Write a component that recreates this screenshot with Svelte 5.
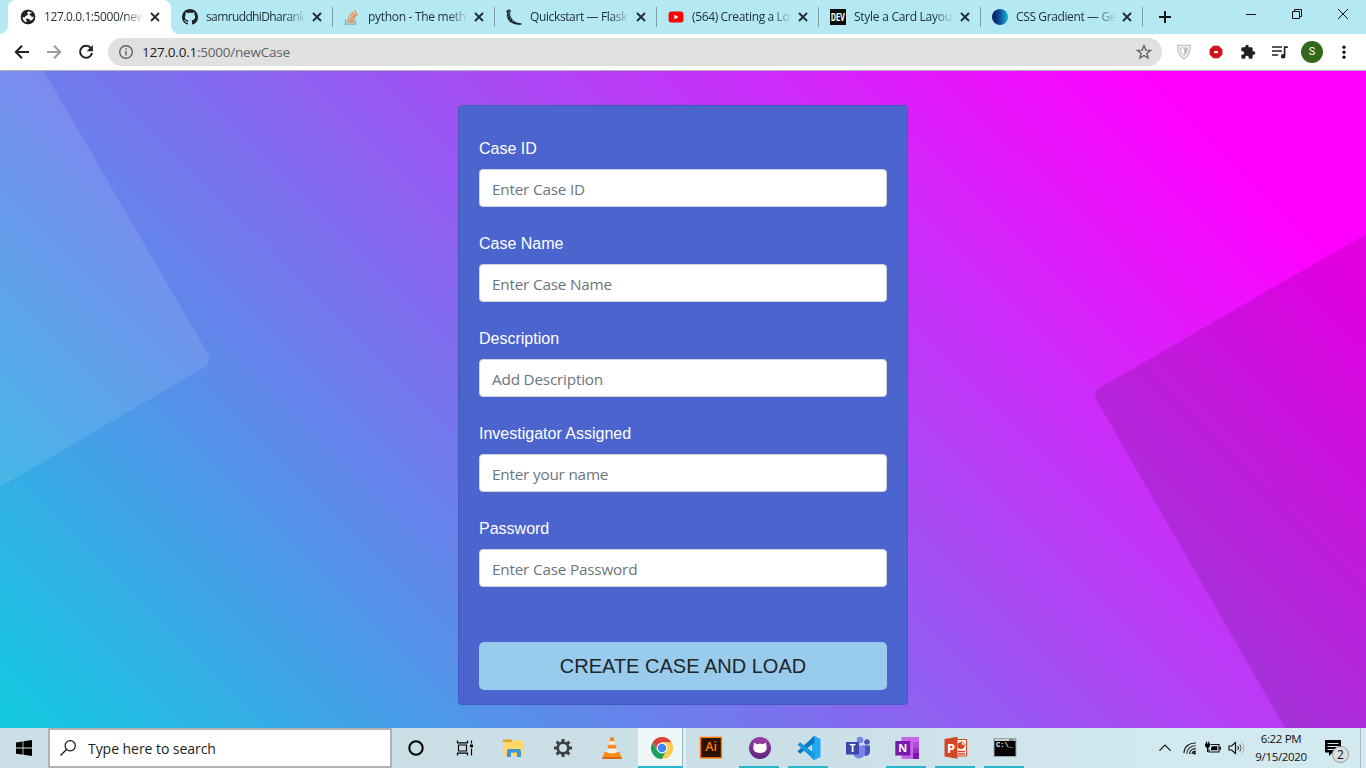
<script>
  const tabs = [
    { icon: 'globe', title: '127.0.0.1:5000/new', ls: -0.42 },
    { icon: 'github', title: 'samruddhiDharank', ls: -0.62 },
    { icon: 'stack', title: 'python - The meth', ls: -0.3 },
    { icon: 'flask', title: 'Quickstart — Flask', ls: -0.38 },
    { icon: 'youtube', title: '(564) Creating a Lo', ls: -0.36 },
    { icon: 'dev', title: 'Style a Card Layou', ls: -0.27 },
    { icon: 'gradient', title: 'CSS Gradient — Ge', ls: -0.38 }
  ];
  const fields = [
    { id: 'case-id', label: 'Case ID', hint: 'Enter Case ID' },
    { id: 'case-name', label: 'Case Name', hint: 'Enter Case Name' },
    { id: 'description', label: 'Description', hint: 'Add Description' },
    { id: 'investigator', label: 'Investigator Assigned', hint: 'Enter your name' },
    { id: 'password', label: 'Password', hint: 'Enter Case Password' }
  ];
  const apps = [
    { name: 'cortana' }, { name: 'taskview' }, { name: 'explorer' }, { name: 'settings' },
    { name: 'vlc' }, { name: 'chrome', active: true }, { name: 'illustrator' },
    { name: 'desktop', open: true }, { name: 'code', open: true }, { name: 'teams' },
    { name: 'onenote', open: true }, { name: 'powerpoint', open: true }, { name: 'terminal', open: true }
  ];
  const catPath = 'M8 0C3.58 0 0 3.58 0 8c0 3.54 2.29 6.53 5.47 7.59.4.07.55-.17.55-.38 0-.19-.01-.82-.01-1.49-2.01.37-2.53-.49-2.69-.94-.09-.23-.48-.94-.82-1.13-.28-.15-.68-.52-.01-.53.63-.01 1.08.58 1.23.82.72 1.21 1.87.87 2.33.66.07-.52.28-.87.51-1.07-1.78-.2-3.64-.89-3.64-3.95 0-.87.31-1.59.82-2.15-.08-.2-.36-1.02.08-2.12 0 0 .67-.21 2.2.82.64-.18 1.32-.27 2-.27s1.36.09 2 .27c1.53-1.04 2.2-.82 2.2-.82.44 1.1.16 1.92.08 2.12.51.56.82 1.27.82 2.15 0 3.07-1.87 3.75-3.65 3.95.29.25.54.73.54 1.48 0 1.07-.01 1.93-.01 2.2 0 .21.15.46.55.38A8.01 8.01 0 0 0 16 8c0-4.42-3.58-8-8-8z';
</script>

{#snippet favicon(name)}
  <svg class="fav" viewBox="0 0 16 16">
    {#if name === 'globe'}
      <circle cx="8" cy="8" r="7.200" fill="#202124" />
      <path d="M8.300 2.300 6.800 4l1.400.8-.6 1.400-2.200.7-.5 1.500-2.500-.5c0 2.800 1.500 4.800 3.900 5.500l.5-1.700-1.300-1.500 1.600-.8 2.300.8.700 1.500 1.900-.7c1.200-.9 1.800-2 1.900-3.400l-2.200.3-.8-1.500-1.500-.2.300-1.600 1.900-.3.500-1.300c-1.100-.7-2.200-1-3.800-.7z" fill="#fff" />
      <circle cx="8" cy="8" r="6.500" fill="none" stroke="#202124" stroke-width="1.500" />
    {:else if name === 'github'}
      <path d={catPath} fill="#1e2327" />
    {:else if name === 'stack'}
      <path d="M1.500 10.500v4.600h9.800v-4.600" fill="none" stroke="#9aa4a8" stroke-width="1.300" />
      <path d="M3.200 13h6.500M3.300 10.600l6.400.7M3.900 8l6.200 1.800M5.400 5.300l5.400 3.300M7.600 3l4.200 4.800M10.600 1.200l2.500 5.700" fill="none" stroke="#ef8236" stroke-width="1.300" />
    {:else if name === 'flask'}
      <path d="M.6 1.600 3.500.2l1.300 1.200-.4 1.700c-.6 2.600.1 4.500 1.400 6.400 1.700 2.500 4.200 4.400 9 4.700l1.200.7-1.900 1c-5.500 0-9.800-1.900-11.900-5.100C.7 8.200.7 5.700 1.200 3.700L.2 3z" fill="#18282d" />
      <path d="M2 3.200 3.800 2M2.400 5l1.600-.6M2.200 7.500l1.700-.8M3.600 10.200l1.600-1.200M6.300 12.800l1-1.700" stroke="#98bfc7" stroke-width=".7" />
    {:else if name === 'youtube'}
      <rect x=".6" y="2.600" width="14.800" height="10.800" rx="2.600" fill="#f00" />
      <path d="m6.400 5.800 4.100 2.200-4.100 2.200z" fill="#fff" />
    {:else if name === 'dev'}
      <rect width="16" height="16" fill="#0a0a0a" />
      <text x="8" y="11.900" text-anchor="middle" textLength="14" lengthAdjust="spacingAndGlyphs" font-family="Roboto, sans-serif" font-weight="700" font-size="10.500" fill="#fff">DEV</text>
    {:else}
      <defs><linearGradient id="disc"><stop stop-color="#07145f" /><stop offset=".45" stop-color="#0d4b91" /><stop offset="1" stop-color="#12b5df" /></linearGradient></defs>
      <circle cx="8" cy="8" r="8" fill="url(#disc)" />
    {/if}
  </svg>
{/snippet}

{#snippet appicon(name)}
  <svg class="app" viewBox="0 0 24 24">
    {#if name === 'cortana'}
      <circle cx="12" cy="12" r="6.700" fill="none" stroke="#000" stroke-width="2" />
    {:else if name === 'taskview'}
      <path d="M4.500 4.500v2.300h10V4.500M4.500 19.500v-2.300h10v2.300M5.500 9h8v6h-8zM18.500 4.500v3M18.500 12.500v7" fill="none" stroke="#000" stroke-width="1.200" />
      <path d="M17 8.500h3v2.800h-3z" />
    {:else if name === 'explorer'}
      <path d="M1 3.500h8.500l1 1.500H22v4H1z" fill="#dfa11c" />
      <path d="M1 6h8l1.500-1.500H22V20H1z" fill="#ffd76b" />
      <path d="M5 21v-6.500L6.500 13h11l1.500 1.500V21h-4v-4.500H9V21z" fill="#3e94d8" />
    {:else if name === 'settings'}
      <circle cx="12" cy="12" r="5.300" fill="none" stroke="#3c4043" stroke-width="2.700" />
      <g stroke="#3c4043" stroke-width="3">
        {#each [0, 45, 90, 135, 180, 225, 270, 315] as a}
          <path d="M12 3v3" transform="rotate({a} 12 12)" />
        {/each}
      </g>
    {:else if name === 'vlc'}
      <path d="M4.500 16h15l2.200 6.500H2.300z" fill="#f58a15" />
      <path d="M2.300 21h19.400v2H2.300z" fill="#d66b05" />
      <path d="M10.300 2c.3-1.400 3.100-1.400 3.400 0l4 15.200c-2 2-9.400 2-11.400 0z" fill="#f7891c" />
      <path d="m9.500 5.200 5 0 1 3.600H8.500zM7.400 12.500h9.200l1 3.600c-2 1.700-9.200 1.700-11.200 0z" fill="#f1f1ec" />
    {:else if name === 'chrome'}
      <circle cx="12" cy="12" r="11" fill="#fff" />
      <path d="M2.470 6.500A11 11 0 0 1 21.530 6.500H12L7.500 14.600z" fill="#db4437" />
      <path d="M2.470 6.500A11 11 0 0 0 12 23L16.500 14.500 12 17 7.400 14.600z" fill="#1da15d" />
      <path d="M21.530 6.500A11 11 0 0 1 12 23L16.700 14.600 15 8l-3-1.500z" fill="#fdce44" />
      <circle cx="12" cy="12" r="5.400" fill="#fff" />
      <circle cx="12" cy="12" r="4.300" fill="#4285f4" />
    {:else if name === 'illustrator'}
      <rect x="1.500" y="1.400" width="21" height="20.500" fill="#2b1100" stroke="#ff7c00" stroke-width="1.400" />
      <text x="12" y="15.400" text-anchor="middle" font-family="Open Sans, sans-serif" font-weight="600" font-size="12.500" fill="#ff7c00">Ai</text>
    {:else if name === 'desktop'}
      <defs><linearGradient id="plum" x2="0" y2="1"><stop stop-color="#9d3da7" /><stop offset="1" stop-color="#5a2480" /></linearGradient></defs>
      <circle cx="12" cy="12" r="11" fill="url(#plum)" />
      <path d="M6 6.500 9 8.200c2-.6 4-.6 6 0l3-1.700.5 4c.8 3.600-.9 6.500-6.500 6.500s-7.300-2.900-6.500-6.500z" fill="#fff" />
    {:else if name === 'code'}
      <path d="m17.200 0 6.300 3v18l-6.300 3-2.200-1.500V1.500z" fill="#24a8f2" />
      <path d="m17.200 0-16.700 15.300 2.500 2.400L17.500 6.800z" fill="#0d76be" />
      <path d="m17.200 24-16.700-15.300 2.500-2.400L17.500 17.200z" fill="#1596df" />
    {:else if name === 'teams'}
      <circle cx="21" cy="6" r="2.800" fill="#4b53bc" /><circle cx="14" cy="4" r="3.300" fill="#7b83eb" />
      <path d="M17 9.500h7v6.500a4 4 0 0 1-6 3.300z" fill="#4b53bc" />
      <path d="M8 9.500h11v7a6 6 0 0 1-12 0z" fill="#7b83eb" />
      <path d="M0 6h13v12.500H0z" fill="#3d46aa" />
      <text x="6.500" y="16" text-anchor="middle" font-family="Open Sans, sans-serif" font-weight="700" font-size="10.500" fill="#fff">T</text>
    {:else if name === 'onenote'}
      <path d="M6.500 1h17.500v22h-17.500z" fill="#c965ea" /><path d="M18 6h6v5.500h-6z" fill="#b04bda" /><path d="M18 11.500h6V17h-6z" fill="#9237c4" /><path d="M18 17h6v6h-6z" fill="#7719aa" />
      <path d="M.3 5h15v14.500H.3z" fill="#7719aa" />
      <text x="7.700" y="16.200" text-anchor="middle" font-family="Open Sans, sans-serif" font-weight="700" font-size="11" fill="#fff">N</text>
    {:else if name === 'powerpoint'}
      <path d="M12 3.500h10.500v16.500H12z" fill="#fff" stroke="#d24726" stroke-width="1.100" />
      <path d="M14 15.500h7M14 18h7" stroke="#d24726" stroke-width="1.300" />
      <circle cx="17" cy="9.500" r="3.500" fill="#d24726" /><path d="M17.700 5v4h4z" fill="#fff" stroke="#d24726" stroke-width=".7" />
      <path d="M.5 3 13.500.8v22L.5 20.500z" fill="#d24726" />
      <text x="7" y="16.500" text-anchor="middle" font-family="Open Sans, sans-serif" font-weight="700" font-size="13" fill="#fff">P</text>
    {:else}
      <rect x="1" y="2.500" width="22" height="18" fill="#050505" stroke="#9aa" />
      <path d="M1.500 3h21v2h-21z" fill="#cfcfcf" />
      <path d="M16 4h5" stroke="#444" stroke-width="1" />
      <text x="3" y="11" textLength="17" lengthAdjust="spacingAndGlyphs" font-family="Liberation Mono, monospace" font-weight="700" font-size="6.500" fill="#eee">C:\_</text>
    {/if}
  </svg>
{/snippet}

<div class="screen">
  <div class="tabstrip">
    {#each tabs as tab, i}
      <div class="tab" class:current={i === 0} class:ruled={i > 0}>
        {@render favicon(tab.icon)}
        <span class="title" style="letter-spacing:{tab.ls}px">{tab.title}</span>
        <svg class="x" viewBox="0 0 10 10"><path d="m1 1 8 8M9 1 1 9" /></svg>
      </div>
    {/each}
    <svg class="plus" viewBox="0 0 12 12"><path d="M6 0v12M0 6h12" /></svg>
    <div class="controls">
      <svg viewBox="0 0 12 12"><path d="M1 6.500h10" /></svg>
      <svg viewBox="0 0 12 12"><path d="M1.500 3.500h7v7h-7zM3.500 3.500v-2h7v7h-2" /></svg>
      <svg viewBox="0 0 12 12"><path d="m1 1 10 10M11 1 1 11" /></svg>
    </div>
  </div>

  <div class="toolbar">
    <svg class="nav" viewBox="0 0 16 16"><path d="M15 8H2M8 1.700 1.800 8 8 14.300" fill="none" stroke="#202124" stroke-width="2" /></svg>
    <svg class="nav" viewBox="0 0 16 16"><path d="M1 8h13M8 1.700 14.200 8 8 14.300" fill="none" stroke="#9b9da0" stroke-width="2" /></svg>
    <svg class="nav" viewBox="0 0 16 16"><path d="M13 4.300A6 6 0 1 0 14 9" fill="none" stroke="#202124" stroke-width="2" /><path d="M14.900 1v6.200H8.700z" fill="#202124" /></svg>
    <div class="omnibox">
      <svg class="info" viewBox="0 0 16 16"><circle cx="8" cy="8" r="6.300" fill="none" stroke="#5f6368" stroke-width="1.400" /><path d="M8 7v4.500M8 4.300v1.500" stroke="#5f6368" stroke-width="1.500" /></svg>
      <span class="url"><b>127.0.0.1</b>:5000/newCase</span>
      <svg class="star" viewBox="0 0 16 16"><path d="m8 1.700 1.800 4.400 4.700.3-3.600 3 1.200 4.600L8 11.500 3.900 14l1.200-4.600-3.600-3 4.700-.3z" fill="none" stroke="#5f6368" stroke-width="1.400" /></svg>
    </div>
    <div class="extensions">
      <svg viewBox="0 0 16 16"><path d="M1.500 1.300h13c0 6-1.500 10.500-6.500 13.600C3 11.800 1.500 7.300 1.500 1.300z" fill="#f4f4f4" stroke="#c1c1c1" stroke-width="1.300" /><path d="M4.500 4h7c0 3.300-.9 5.600-3.500 7.600C5.400 9.600 4.500 7.300 4.500 4z" fill="#fff" stroke="#c1c1c1" /><path d="M8 4h3.500c0 3.300-.9 5.600-3.500 7.600z" fill="#c1c1c1" /></svg>
      <svg viewBox="0 0 16 16"><path d="M5.300 1.700h5.400l3.700 3.700v5.200l-3.700 3.700H5.300l-3.700-3.700V5.400z" fill="#d0101b" /><path d="M6.200 7h3.600v2.200H6.200z" fill="#fff" /></svg>
      <svg viewBox="0 0 24 24"><path d="M20.500 11H19V7a2 2 0 0 0-2-2h-4V3.500a2.500 2.500 0 0 0-5 0V5H4a2 2 0 0 0-2 2v3.800h1.500a2.700 2.700 0 0 1 0 5.400H2V20a2 2 0 0 0 2 2h3.800v-1.500a2.700 2.700 0 0 1 5.400 0V22H17a2 2 0 0 0 2-2v-4h1.500a2.500 2.500 0 0 0 0-5z" fill="#202124" /></svg>
      <svg viewBox="0 0 16 16"><path d="M0 3h10M0 7h10M0 11h6" stroke="#202124" stroke-width="1.600" /><path d="M15.800 2.200h-4v8a2.200 2.200 0 1 0 1.600 2.100V3.900h2.400z" fill="#202124" /></svg>
      <span class="avatar">S</span>
      <svg viewBox="0 0 16 16"><circle cx="8" cy="3.200" r="1.600" /><circle cx="8" cy="8.200" r="1.600" /><circle cx="8" cy="13.200" r="1.600" /></svg>
    </div>
  </div>

  <main class="page">
    <svg class="shapes" viewBox="0 71 1366 657">
      <path d="M0 71H44L208.200 354.500Q211.500 361 205.500 366.500L0 487z" fill="#fff" fill-opacity=".1" />
      <path d="M1366 234 1099.500 388Q1093 392.500 1096 399L1285 728H1366z" fill="#000" fill-opacity=".12" />
    </svg>
    <form class="card">
      {#each fields as f}
        <div class="field">
          <label for={f.id}>{f.label}</label>
          <input id={f.id} type="text" placeholder={f.hint} />
        </div>
      {/each}
      <button type="button">CREATE CASE AND LOAD</button>
    </form>
  </main>

  <footer class="taskbar">
    <div class="start">
      <svg viewBox="0 0 16 16"><path d="M0 2.400 6.600 1.400v6.200H0zM7.400 1.300 16 0v7.600H7.400zM0 8.400h6.600v6.200L0 13.700zM7.400 8.400H16V16l-8.600-1.300z" /></svg>
    </div>
    <div class="search">
      <svg viewBox="0 0 16 16"><circle cx="10.200" cy="5.800" r="5.100" fill="none" stroke="#111" stroke-width="1.200" /><path d="M6.500 9.500.5 15.500" stroke="#111" stroke-width="1.300" /></svg>
      <span>Type here to search</span>
    </div>
    <div class="apps">
      {#each apps as app}
        <div class="slot" class:open={app.open} class:active={app.active}>{@render appicon(app.name)}</div>
      {/each}
    </div>
    <div class="tray">
      <svg class="chev" viewBox="0 0 12 12"><path d="M.5 8.700 6 3.200l5.500 5.500" fill="none" stroke="#111" stroke-width="1.200" /></svg>
      <svg class="wifi" viewBox="0 0 14 14"><g fill="none" stroke="#111" stroke-width="1.100"><path d="M1 12C1.200 5.500 6 1.800 12.800 2" /><path d="M3.700 13C3.800 8 7.500 4.700 12.800 4.800" stroke="#333" /><path d="M6.500 13c.2-3.300 2.800-5.500 6.300-5.400" /><path d="M9 13c.2-1.700 1.700-2.900 3.800-2.900" /></g><circle cx="11.500" cy="12.200" r="1.200" /></svg>
      <svg class="batt" viewBox="0 0 18 14"><path d="M6.500 3.500h8.500v7.500H5V8" fill="none" stroke="#111" stroke-width="1.100" /><path d="M8 5.300h5.300v4H7V7zM15.500 5.700H17v3h-1.500zM1 2.500h5V5L4.500 7h-2L1 5zM2 .5h1V3H2zM4.200.5h1V3h-1zM3 6.500h1.200V11H3z" /></svg>
      <svg class="vol" viewBox="0 0 18 14"><path d="M1 5h2.500l4-3.500v11L3.500 9H1z" fill="none" stroke="#111" stroke-width="1.200" /><path d="M9.800 5q1.400 2 0 4" fill="none" stroke="#111" stroke-width="1.100" /><path d="M11.800 3.300q2.700 3.700 0 7.400" fill="none" stroke="#555" /><path d="M14 1.700q4 5.300 0 10.600" fill="none" stroke="#a2afb5" /></svg>
      <div class="clock"><span>6:22 PM</span><span>9/15/2020</span></div>
      <div class="notes">
        <svg viewBox="0 0 16 16"><path d="M0 0h16v12.500H7.500L4 16v-3.500H0z" /><path d="M2.500 3.500h11M2.500 6.500h11M2.500 9.500h11" stroke="#d2e8ef" stroke-width="1.200" /></svg>
        <span class="count">2</span>
      </div>
    </div>
  </footer>
</div>

<style>
  :global(body) { margin: 0; overflow: hidden; }
  * { box-sizing: border-box; }
  svg { display: block; flex: none; }
  .screen { width: 1366px; height: 768px; display: flex; flex-direction: column; overflow: hidden; font-family: "Open Sans", "Noto Sans", sans-serif; }

  .tabstrip { height: 34px; flex: none; display: flex; padding-left: 8px; background: #b4e8f2; }
  .tab { width: 162px; height: 34px; display: flex; align-items: center; padding-left: 12px; position: relative; }
  .tab.current { width: 163px; margin-right: -1px; background: #fff; border-radius: 8px 8px 0 0; }
  .tab.current::before, .tab.current::after { content: ""; position: absolute; bottom: 0; width: 8px; height: 8px; }
  .tab.current::before { left: -8px; background: radial-gradient(circle at 0 0, #b4e8f2 7.5px, #fff 8px); }
  .tab.current::after { right: -8px; background: radial-gradient(circle at 100% 0, #b4e8f2 7.5px, #fff 8px); }
  .tab.ruled::after { content: ""; position: absolute; right: -1px; top: 7px; width: 1px; height: 20px; background: #819da5; }
  .fav { width: 16px; height: 16px; margin-right: 8px; }
  .title { width: 100px; white-space: nowrap; font-size: 12px; line-height: 20px; color: #1f2e33; -webkit-mask-image: linear-gradient(90deg, #000 80%, transparent); mask-image: linear-gradient(90deg, #000 80%, transparent); }
  .x { width: 10px; height: 10px; margin-left: 6px; fill: none; stroke: #202b2f; stroke-width: 1.8; }
  .plus { width: 12px; height: 12px; margin: 11px 0 0 17px; stroke: #111; stroke-width: 2; }
  .controls { margin-left: auto; display: flex; gap: 34px; padding: 8px 17px 0 0; }
  .controls svg { width: 12px; height: 12px; fill: none; stroke: #111; stroke-width: 1; }

  .toolbar { height: 37px; flex: none; display: flex; align-items: center; padding: 0 14px; background: #fff; border-bottom: 1px solid #b3b0b3; }
  .nav { width: 16px; height: 16px; margin-right: 16px; }
  .nav:nth-child(3) { margin-right: 14px; }
  .omnibox { width: 1054px; height: 28px; display: flex; align-items: center; padding: 0 10px; border-radius: 14px; background: #e0e0e0; }
  .info, .star { width: 16px; height: 16px; }
  .url { margin-left: 8px; font-size: 13.5px; letter-spacing: -.22px; color: #5f6368; white-space: nowrap; }
  .url b { font-weight: 400; color: #202124; }
  .star { margin-left: auto; }
  .extensions { display: flex; align-items: center; gap: 16px; margin-left: 14px; }
  .extensions svg { width: 16px; height: 16px; }
  .avatar { width: 22px; height: 22px; margin: 0 -3px; border-radius: 50%; background: #33691e; color: #fff; font: 11px/22px Roboto, sans-serif; text-align: center; }

  .page { height: 657px; flex: none; position: relative; display: flex; justify-content: center; padding-top: 34px; background: linear-gradient(45deg, #12cbe1 0%, #f0f 89%); }
  .shapes { position: absolute; inset: 0; width: 1366px; height: 657px; }
  .card { position: relative; width: 450px; height: 600px; display: flex; flex-direction: column; padding: 30px 20px 14px; background: #4b64ce; border: 1px solid #435ab9; border-radius: 4px; }
  .field { display: flex; flex-direction: column; height: 95px; }
  label { height: 33px; font: 16px/25px "Liberation Sans", sans-serif; color: #fff; }
  input { height: 38px; width: 100%; padding: 8px 12px 6px; border: 1px solid #ced4da; border-radius: 4px; background: #fff; font: 15.3px "Open Sans", sans-serif; letter-spacing: -.2px; color: #495057; }
  input::placeholder { color: #6c757d; opacity: 1; }
  button { margin-top: auto; height: 48px; border: 0; border-radius: 5px; background: #99ccec; color: #212529; font: 20px "Liberation Sans", sans-serif; }

  .taskbar { height: 40px; flex: none; display: flex; background: linear-gradient(90deg, #c9dfe5, #cbe0e6 60%, #d3e9f0 85%); }
  .start { width: 48px; display: flex; align-items: center; justify-content: center; }
  .start svg { width: 16px; height: 16px; }
  .search { width: 344px; display: flex; align-items: center; gap: 12px; padding-left: 10px; border: 2px solid #b0b2b4; background: #fff; font-size: 14px; letter-spacing: -.05px; color: #222; }
  .search svg { width: 16px; height: 16px; }
  .apps { display: flex; margin-left: -.3px; }
  .slot { width: 49.07px; height: 40px; display: flex; align-items: center; justify-content: center; position: relative; }
  .slot.active { background: linear-gradient(90deg, transparent 1px, #f0f7f9 1px 45px, #93bcc5 45px 46px, #dfedf1 46px 49px); }
  .slot.open::after, .slot.active::after { content: ""; position: absolute; left: 4px; bottom: 0; width: 40px; height: 2px; background: #28b6cf; }
  .slot.active::after { left: 1px; width: 45px; }
  .app { width: 24px; height: 24px; }
  .slot:first-child .app { margin-left: -1px; }
  .tray { margin-left: auto; display: flex; align-items: center; width: 213px; border-right: 5px solid #d6eaf1; box-shadow: inset -1px 0 #a9bdc4; }
  .chev { width: 12px; height: 12px; margin-left: 6px; }
  .wifi { width: 14px; height: 14px; margin-left: 12px; }
  .batt { width: 18px; height: 14px; margin-left: 7px; }
  .vol { width: 18px; height: 14px; margin-left: 6px; }
  .clock { width: 62px; margin-left: 4px; display: flex; flex-direction: column; align-items: center; font-size: 11.5px; line-height: 18px; letter-spacing: -.35px; color: #111; margin-top: -1px; }
  .notes { position: relative; width: 16px; height: 16px; margin-left: 13px; }
  .notes svg { width: 16px; height: 16px; }
  .count { position: absolute; left: 7px; top: 6px; width: 17px; height: 17px; border-radius: 50%; border: 1px solid #8e9699; background: #dcdfe0; font-size: 12px; line-height: 15px; text-align: center; color: #111; }
</style>
